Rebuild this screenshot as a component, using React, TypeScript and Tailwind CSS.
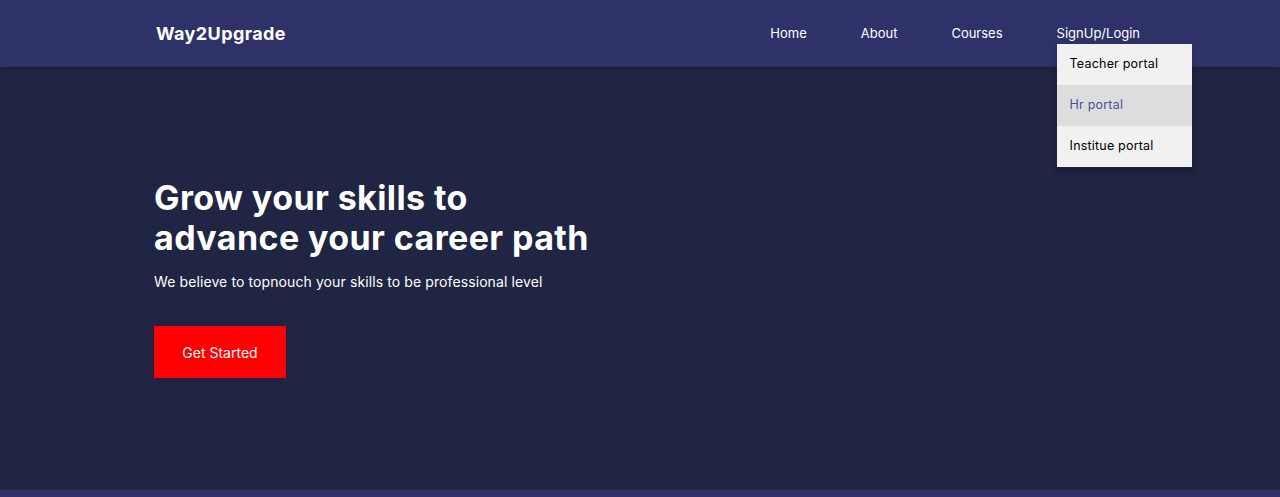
export default function App() {
  const links = ['Home', 'About', 'Courses']
  const portals = ['Teacher portal', 'Hr portal', 'Institue portal']

  return (
    <div className="h-[497px] bg-[#1f2542] text-white font-['Inter',sans-serif] overflow-hidden flex flex-col">
      {/* Navbar */}
      <nav className="h-[67px] bg-[#2f3268] shrink-0 shadow-[0_1px_2px_rgba(0,0,0,0.25)]">
        <div className="h-full flex items-center pl-[156px] pr-[140px]">
          <span className="text-[18px] font-bold tracking-[0.4px]">Way2Upgrade</span>
          <ul className="ml-auto flex items-center gap-[54px] text-[13px]">
            {links.map((l) => (
              <li key={l}>{l}</li>
            ))}
            <li className="relative">
              SignUp/Login
              <div className="absolute left-0 top-[20px] w-[135px] bg-[#f1f1f1] text-black tracking-[0.2px] shadow-[0_4px_8px_rgba(0,0,0,0.2)]">
                {portals.map((p, i) => (
                  <div
                    key={p}
                    className={`h-[41px] flex items-center px-[13px] text-[12.5px] ${
                      i === 1 ? 'bg-[#dddddd] text-[#4a4f98]' : ''
                    }`}
                  >
                    {p}
                  </div>
                ))}
              </div>
            </li>
          </ul>
        </div>
      </nav>

      {/* Hero */}
      <section className="flex-1 flex flex-col items-start pl-[154px] pt-[111px]">
        <h1 className="text-[34px] font-bold leading-[40px] tracking-[0.4px]">
          Grow your skills to
          <br />
          advance your career path
        </h1>
        <p className="mt-[14px] text-[14px] leading-[20px] tracking-[0.1px]">
          We believe to topnouch your skills to be professional level
        </p>
        <button className="mt-[34px] w-[132px] h-[52px] bg-[#ff0000] text-[14px] text-white">Get Started</button>
      </section>

      <div className="h-[7px] bg-[#2f3268] shrink-0" />
    </div>
  )
}
